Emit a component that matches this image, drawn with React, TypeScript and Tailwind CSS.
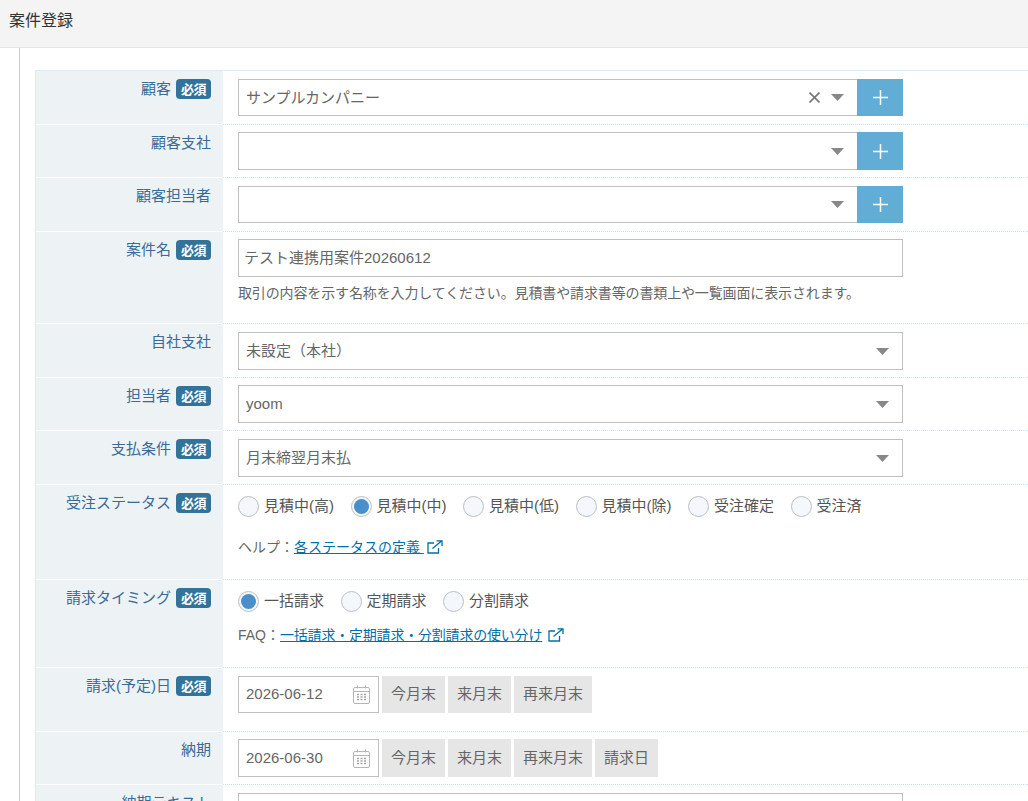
import React from "react";

const FONT = "font-['Liberation_Sans','Noto_Sans_CJK_JP',sans-serif]";

function Badge() {
  return (
    <span className="ml-[5px] inline-flex h-[20px] w-[35px] items-center justify-center rounded-[4px] bg-[#337399] text-[13px] font-bold leading-none tracking-[-0.5px] text-white">
      必須
    </span>
  );
}

function Row({ label, req, h, pt = 8, children }: { label: string; req?: boolean; h: number; pt?: number; children: React.ReactNode }) {
  return (
    <div className="flex" style={{ height: h }}>
      <div className="flex w-[187px] shrink-0 items-start justify-end border-b border-b-white bg-[#edf2f5] pr-[12px] pt-[8px] text-[15px] leading-[20px] text-[#3a6a96]">
        <span>{label}</span>
        {req && <Badge />}
      </div>
      <div className="flex-1 border-b border-dotted border-b-[#cbe3f7] pl-[15px]" style={{ paddingTop: pt }}>
        {children}
      </div>
    </div>
  );
}

function Caret() {
  return (
    <svg width="13" height="7" viewBox="0 0 13 7">
      <path d="M0 0H13L6.5 7Z" fill="#888888" />
    </svg>
  );
}

function ComboBox({ value, clear, h }: { value?: string; clear?: boolean; h: number }) {
  return (
    <div className="flex w-[665px]" style={{ height: h }}>
      <div className="flex flex-1 items-center border border-r-0 border-[#c0c0c0] pl-[7px] pr-[13px] text-[15px] text-[#666666]">
        <span className="flex-1 pt-[1px]">{value}</span>
        {clear && (
          <svg width="11" height="11" viewBox="0 0 11 11" className="mr-[11px]">
            <path d="M0.5 0.5L10.5 10.5M10.5 0.5L0.5 10.5" stroke="#777777" strokeWidth="1.6" />
          </svg>
        )}
        <Caret />
      </div>
      <div className="flex w-[46px] items-center justify-center bg-[#62add6]">
        <svg width="15" height="15" viewBox="0 0 15 15">
          <path d="M7.5 0V15M0 7.5H15" stroke="#ffffff" strokeWidth="1.5" />
        </svg>
      </div>
    </div>
  );
}

function Select({ value }: { value: string }) {
  return (
    <div className="flex h-[38px] w-[665px] items-center justify-between border border-[#c0c0c0] pl-[7px] pr-[13px] text-[15px] text-[#666666]">
      <span>{value}</span>
      <Caret />
    </div>
  );
}

function Radio({ label, checked, mr }: { label: string; checked?: boolean; mr: number }) {
  return (
    <span className="flex items-center text-[15px] text-[#555555]" style={{ marginRight: mr }}>
      <span className="mr-[5px] flex h-[21px] w-[21px] items-center justify-center rounded-full border border-[#b9c0c6] bg-[#f4f7fb]">
        {checked && <span className="h-[15px] w-[15px] rounded-full bg-[#4a8fca]" />}
      </span>
      {label}
    </span>
  );
}

function ExtIcon({ ml }: { ml: string }) {
  return (
    <svg width="16" height="14" viewBox="0 0 16 14" className={`${ml} inline-block`} fill="none" stroke="#006fa8" strokeWidth="1.3">
      <path d="M11.5 8V13H1V3H7" />
      <path d="M5.5 8.5L14.5 1M9.5 0.8H15V6" />
    </svg>
  );
}

function DateField({ value, buttons, h }: { value: string; buttons: string[]; h: number }) {
  return (
    <div className="flex gap-[3px]" style={{ height: h }}>
      <div className="flex w-[141px] items-center justify-between border border-[#c0c0c0] pl-[7px] pr-[8px] text-[15px] text-[#666666]">
        <span>{value}</span>
        <svg width="17" height="19" viewBox="0 0 17 19" fill="none">
          <rect x="0.5" y="2.5" width="16" height="16" rx="1.5" stroke="#b5b5b5" />
          <path d="M0.5 6.5H16.5M4.5 0.5V3.5M12.5 0.5V3.5" stroke="#b5b5b5" />
          <path d="M4 9.5h2M7.5 9.5h2M11 9.5h2M4 12h2M7.5 12h2M11 12h2M4 14.5h2M7.5 14.5h2M11 14.5h2" stroke="#a5a5a5" strokeWidth="1.4" />
        </svg>
      </div>
      {buttons.map((b) => (
        <span key={b} className="flex items-center bg-[#e6e6e6] px-[9px] text-[15px] text-[#666666]">
          {b}
        </span>
      ))}
    </div>
  );
}

export default function App() {
  return (
    <div className={`${FONT} h-[801px] w-[1028px] overflow-hidden bg-white`}>
      <div className="flex h-[48px] items-start border-b border-[#e4e4e4] bg-[#f4f4f4] pl-[9px] pt-[11px] text-[16px] leading-[20px] text-[#333333]">
        案件登録
      </div>
      <div className="ml-[19px] h-[753px] border-l border-[#c8ced3] pl-[15px] pt-[22px]">
        <div className="w-[993px] border-l border-t border-[#dcebf7]">
          <Row label="顧客" req h={54}>
            <ComboBox value="サンプルカンパニー" clear h={37} />
          </Row>
          <Row label="顧客支社" h={53} pt={7}>
            <ComboBox h={38} />
          </Row>
          <Row label="顧客担当者" h={54}>
            <ComboBox h={37} />
          </Row>
          <Row label="案件名" req h={92} pt={7}>
            <div className="flex h-[38px] w-[665px] items-center border border-[#c0c0c0] pl-[5px] text-[15px] text-[#666666]">
              テスト連携用案件20260612
            </div>
            <p className="mt-[6px] text-[14px] leading-[20px] tracking-[-0.13px] text-[#666666]">
              取引の内容を示す名称を入力してください。見積書や請求書等の書類上や一覧画面に表示されます。
            </p>
          </Row>
          <Row label="自社支社" h={54}>
            <Select value="未設定（本社）" />
          </Row>
          <Row label="担当者" req h={53} pt={7}>
            <Select value="yoom" />
          </Row>
          <Row label="支払条件" req h={54}>
            <Select value="月末締翌月末払" />
          </Row>
          <Row label="受注ステータス" req h={95}>
            <div className="flex h-[27px] items-center">
              <Radio label="見積中(高)" mr={16.5} />
              <Radio label="見積中(中)" checked mr={16.5} />
              <Radio label="見積中(低)" mr={16.5} />
              <Radio label="見積中(除)" mr={16.5} />
              <Radio label="受注確定" mr={16.5} />
              <Radio label="受注済" mr={0} />
            </div>
            <p className="mt-[17px] flex items-center text-[14px] leading-[20px] text-[#666666]">
              ヘルプ：<a className="text-[#006fa8] underline">各ステータスの定義&nbsp;</a>
              <ExtIcon ml="ml-[3px]" />
            </p>
          </Row>
          <Row label="請求タイミング" req h={88}>
            <div className="flex h-[27px] items-center">
              <Radio label="一括請求" checked mr={16.5} />
              <Radio label="定期請求" mr={16.5} />
              <Radio label="分割請求" mr={0} />
            </div>
            <p className="mt-[10px] flex items-center text-[14px] leading-[20px] text-[#666666]">
              FAQ：<a className="tracking-[-0.2px] text-[#006fa8] underline">一括請求・定期請求・分割請求の使い分け</a>
              <ExtIcon ml="ml-[6px]" />
            </p>
          </Row>
          <Row label="請求(予定)日" req h={64}>
            <DateField value="2026-06-12" buttons={["今月末", "来月末", "再来月末"]} h={37} />
          </Row>
          <Row label="納期" h={53} pt={7}>
            <DateField value="2026-06-30" buttons={["今月末", "来月末", "再来月末", "請求日"]} h={38} />
          </Row>
          <Row label="納期テキスト" h={60}>
            <div className="h-[38px] w-[665px] border border-[#c0c0c0]" />
          </Row>
        </div>
      </div>
    </div>
  );
}
